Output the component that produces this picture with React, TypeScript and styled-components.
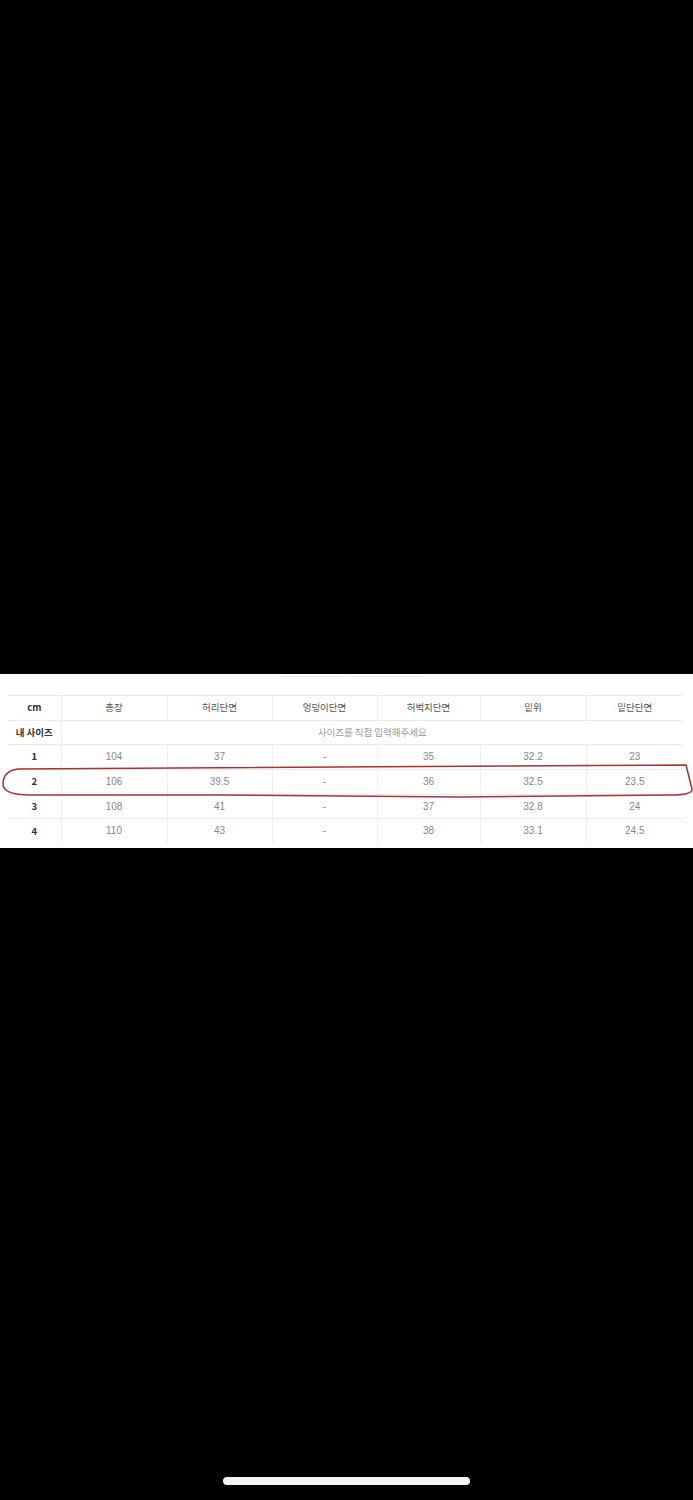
import React from "react";
import styled, { createGlobalStyle } from "styled-components";

const Global = createGlobalStyle`
  html, body { margin: 0; padding: 0; background: #000; }
  body { font-family: "Noto Sans CJK KR", "Noto Sans", sans-serif; }
`;

const Page = styled.div`
  width: 693px;
  min-height: 1500px;
  background: #000;
  display: flex;
  flex-direction: column;
  align-items: stretch;
`;

const TopBlack = styled.div`
  height: 674px;
`;

const Band = styled.div`
  position: relative;
  height: 174px;
  background: #fff;
  display: flex;
  flex-direction: column;
`;

const FadeStrip = styled.div`
  height: 21px;
  display: flex;
  gap: 8px;
  padding-left: 282px;
  align-items: flex-start;
`;

const FadeLine = styled.div<{ $w: number }>`
  margin-top: 2px;
  width: ${(p) => p.$w}px;
  height: 1px;
  background: #ececec;
`;

const Table = styled.table`
  margin-left: 8px;
  width: 675px;
  border-collapse: collapse;
  table-layout: fixed;
  font-size: 9.5px;
`;

const Row = styled.tr<{ $h: number }>`
  height: ${(p) => p.$h}px;
  border-top: 1px solid #ececec;
`;

const Cell = styled.td<{ $kind?: "label" | "head" | "data" | "note" }>`
  padding: 0;
  text-align: center;
  vertical-align: middle;
  border-left: 1px solid #f0f0f0;
  &:first-child { border-left: none; }
  color: ${(p) =>
    p.$kind === "label" ? "#333" : p.$kind === "head" ? "#555" : p.$kind === "note" ? "#9a9a9a" : "#888"};
  font-weight: ${(p) => (p.$kind === "label" ? 700 : 400)};
  font-size: ${(p) => (p.$kind === "data" ? "10px" : "9.5px")};
  font-family: ${(p) =>
    p.$kind === "data" ? '"Liberation Sans", "Noto Sans CJK KR", sans-serif' : '"Noto Sans CJK KR", sans-serif'};
  line-height: 1;
`;

const Overlay = styled.svg`
  position: absolute;
  left: 0;
  top: 0;
  width: 693px;
  height: 174px;
  pointer-events: none;
`;

const Spacer = styled.div`
  height: 629px;
`;

const HomeBar = styled.div`
  align-self: center;
  width: 247px;
  height: 8px;
  border-radius: 4px;
  background: #f4f4f4;
`;

const headers = ["cm", "총장", "허리단면", "엉덩이단면", "허벅지단면", "밑위", "밑단단면"];
const rows = [
  ["1", "104", "37", "-", "35", "32.2", "23"],
  ["2", "106", "39.5", "-", "36", "32.5", "23.5"],
  ["3", "108", "41", "-", "37", "32.8", "24"],
  ["4", "110", "43", "-", "38", "33.1", "24.5"],
];
const widths = [53, 106, 105, 105, 103, 106, 97];
const rowHeights = [25, 25, 24, 25];

export default function App() {
  return (
    <Page>
      <Global />
      <TopBlack />
      <Band>
        <FadeStrip>
          <FadeLine $w={60} />
          <FadeLine $w={72} />
        </FadeStrip>
        <Table>
          <colgroup>
            {widths.map((w, i) => (
              <col key={i} style={{ width: w }} />
            ))}
          </colgroup>
          <tbody>
            <Row $h={25}>
              {headers.map((h, i) => (
                <Cell key={i} $kind={i === 0 ? "label" : "head"}>
                  {h}
                </Cell>
              ))}
            </Row>
            <Row $h={24}>
              <Cell $kind="label">내 사이즈</Cell>
              <Cell $kind="note" colSpan={6}>
                사이즈를 직접 입력해주세요
              </Cell>
            </Row>
            {rows.map((r, ri) => (
              <Row key={ri} $h={rowHeights[ri]}>
                {r.map((v, ci) => (
                  <Cell key={ci} $kind={ci === 0 ? "label" : "data"}>
                    {v}
                  </Cell>
                ))}
              </Row>
            ))}
          </tbody>
        </Table>
        <Overlay viewBox="0 0 693 174">
          <path
            d="M18 95 L686 91 L692 115 Q693 121 670 121 L460 123 L220 121 L30 121 Q3 121 3 110 Q3 97 18 95 Z"
            fill="none"
            stroke="#a83434"
            strokeWidth="1.5"
            strokeLinejoin="round"
          />
        </Overlay>
      </Band>
      <Spacer />
      <HomeBar />
    </Page>
  );
}
